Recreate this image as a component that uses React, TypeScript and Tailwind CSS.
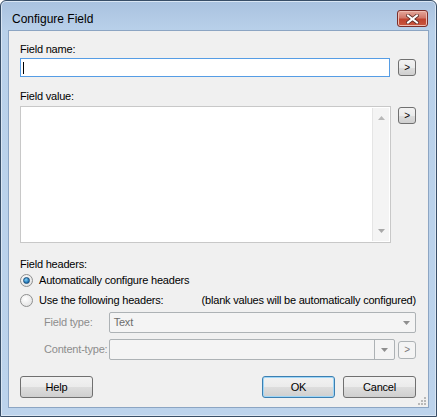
import { type ReactNode } from "react";

const font = "font-['Liberation_Sans',Arial,sans-serif]";

function Arrow({ small, label }: { small?: boolean; label?: string }) {
  return (
    <button
      className={`flex items-center justify-center rounded-[3px] border text-[10px] leading-none ${small ? "h-[18px] w-[18px] border-[#adb2b5] bg-[#f4f4f4] text-[#7a7a7a]" : "h-[17px] w-[18px] border-[#707070] bg-[linear-gradient(#f2f2f2_0%,#ebebeb_50%,#dddddd_51%,#cfcfcf_100%)] text-black"}`}
    >
      {label ?? ">"}
    </button>
  );
}

function Btn({ children, primary }: { children: ReactNode; primary?: boolean }) {
  return (
    <button
      className={`flex h-[22px] w-[73px] items-center justify-center rounded-[3px] border text-[11px] text-black ${primary ? "border-[#3c7fb1] shadow-[inset_0_0_0_1px_#9fd6f7]" : "border-[#707070]"} bg-[linear-gradient(#f2f2f2_0%,#ebebeb_50%,#dddddd_51%,#cfcfcf_100%)]`}
    >
      {children}
    </button>
  );
}

function Radio({ checked }: { checked?: boolean }) {
  return (
    <span className="flex h-[13px] w-[13px] shrink-0 items-center justify-center rounded-full border border-[#8e8f8f] bg-[radial-gradient(circle_at_40%_35%,#ffffff,#dcdcdc)]">
      {checked && (
        <span className="h-[7px] w-[7px] rounded-full border border-[#1d4f7a] bg-[radial-gradient(circle_at_40%_35%,#7fd2f9,#1c6fb1_70%)]" />
      )}
    </span>
  );
}

function DropArrow({ color = "#8e8e8e" }: { color?: string }) {
  return (
    <svg width="7" height="4" viewBox="0 0 7 4">
      <path d="M0 0h7L3.5 4z" fill={color} />
    </svg>
  );
}

export default function App() {
  return (
    <div className={`h-[417px] w-[438px] bg-white ${font}`}>
      <div className="flex h-[417px] w-[437px] flex-col rounded-t-[6px] border border-[#384e67] bg-[linear-gradient(#a9c2df_0px,#b9d1ea_30px,#bcd3ec_100%)] shadow-[inset_0_0_0_1px_#d9e6f4]">
        {/* title bar */}
        <div className="flex h-[29px] shrink-0 items-start justify-between pl-[11px] pr-[8px]">
          <span className="mt-[11px] text-[12px] leading-[14px] text-black">Configure Field</span>
          <div className="mt-[9px] flex h-[17px] w-[31px] items-center justify-center rounded-[3px] border border-[#7b2e2a] bg-[linear-gradient(#e5a89c_0%,#d1786a_45%,#c0432f_55%,#c9573f_100%)] shadow-[inset_0_0_0_1px_#eebcb2]">
            <svg width="13" height="10" viewBox="0 0 13 10">
              <path d="M2 1.5l9 7M11 1.5l-9 7" stroke="#5b2a24" strokeWidth="3.6" strokeLinecap="square" />
              <path d="M2 1.5l9 7M11 1.5l-9 7" stroke="#ffffff" strokeWidth="2" strokeLinecap="square" />
            </svg>
          </div>
        </div>

        {/* client area */}
        <div className="relative mx-[7px] flex h-[378px] flex-col whitespace-nowrap border border-[#8ca5c3] bg-[#f0f0f0] pl-[11px] pr-[12px] pt-[12px] text-[11px] leading-[13px] tracking-[-0.2px] text-black">
          <span>Field name:</span>
          <div className="mt-[2px] flex items-start">
            <div className="flex h-[19px] w-[372px] items-center border border-[#569de5] bg-white pl-[2px]">
              <span className="h-[12px] w-px bg-black" />
            </div>
            <div className="ml-[8px] mt-[1px]">
              <Arrow />
            </div>
          </div>

          <span className="mt-[13px]">Field value:</span>
          <div className="mt-[3px] flex items-start">
            <div className="flex h-[137px] w-[372px] justify-end border border-[#c8c8c8] bg-white p-px">
              <div className="flex w-[17px] flex-col items-center justify-between border-l border-[#e5e5e5] bg-[#f4f4f4] py-[8px]">
                <svg width="7" height="4" viewBox="0 0 7 4">
                  <path d="M3.5 0L7 4H0z" fill="#b8b8b8" />
                </svg>
                <DropArrow color="#a8a8a8" />
              </div>
            </div>
            <div className="ml-[7px] mt-px">
              <Arrow />
            </div>
          </div>

          <span className="mt-[15px]">Field headers:</span>
          <div className="mt-[3px] flex items-center">
            <Radio checked />
            <span className="ml-[6px]">Automatically configure headers</span>
          </div>
          <div className="mt-[7px] flex items-center">
            <Radio />
            <span className="ml-[6px] w-[164px]">Use the following headers:</span>
            <span>(blank values will be automatically configured)</span>
          </div>

          <div className="mt-[5px] flex items-center text-[#8d8d8d]">
            <span className="ml-[24px] w-[65px]">Field type:</span>
            <div className="flex h-[21px] w-[309px] items-center justify-between rounded-[2px] border border-[#adb2b5] bg-[#f4f4f4] pl-[4px] pr-[5px] text-[#6d6d6d]">
              <span>Text</span>
              <DropArrow />
            </div>
          </div>

          <div className="mt-[6px] flex items-center text-[#8d8d8d]">
            <span className="ml-[24px] w-[65px]">Content-type:</span>
            <div className="flex h-[21px] w-[288px] items-stretch justify-end rounded-[2px] border border-[#adb2b5] bg-[#f4f4f4]">
              <div className="flex w-[20px] items-center justify-center border-l border-[#adb2b5]">
                <DropArrow />
              </div>
            </div>
            <div className="ml-[3px]">
              <Arrow small />
            </div>
          </div>

          <div className="mt-[16px] flex items-center">
            <Btn>Help</Btn>
            <div className="ml-auto flex gap-[8px]">
              <Btn primary>OK</Btn>
              <Btn>Cancel</Btn>
            </div>
          </div>

          {/* size grip */}
          <svg className="absolute bottom-[2px] right-[2px]" width="9" height="9" viewBox="0 0 9 9">
            {[
              [7, 1],
              [7, 4],
              [4, 4],
              [7, 7],
              [4, 7],
              [1, 7],
            ].map(([x, y]) => (
              <rect key={`${x}-${y}`} x={x} y={y} width="2" height="2" fill="#b8b8b8" />
            ))}
          </svg>
        </div>
      </div>
    </div>
  );
}
